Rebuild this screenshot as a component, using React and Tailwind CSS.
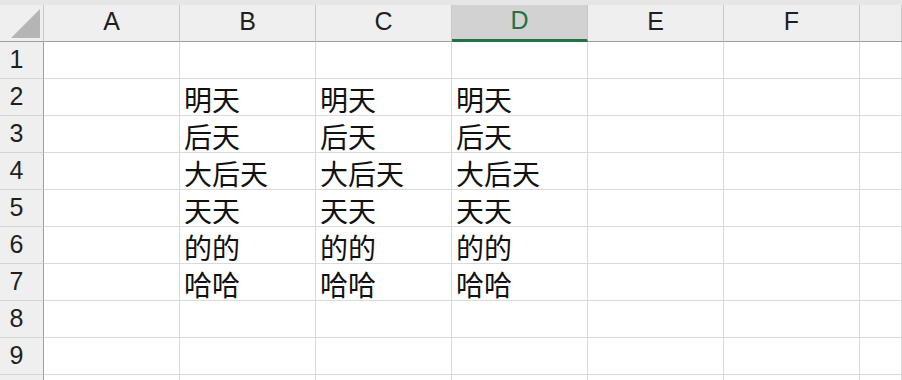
import React from 'react';

const columns = ['A', 'B', 'C', 'D', 'E', 'F', ''];
const selectedCol = 'D';

// values in columns B, C and D, rows 2 to 7
const words = ['明天', '后天', '大后天', '天天', '的的', '哈哈'];

const cellValue = (row, col) => {
  if (['B', 'C', 'D'].includes(col) && row >= 2 && row <= 7) return words[row - 2];
  return '';
};

const latin = { fontFamily: '"Liberation Sans", Arial, sans-serif' };
const cjk = { fontFamily: '"Noto Sans CJK SC", "Noto Sans", sans-serif' };

const App = () => {
  const rows = [1, 2, 3, 4, 5, 6, 7, 8, 9, 10];

  return (
    <div className="w-[902px] h-[380px] overflow-hidden bg-white">
      <div className="h-[5px] bg-[#e6e6e6]" />
      <div className="grid grid-cols-[44px_136px_136px_136px_136px_136px_136px_1fr]">
        {/* --- header row --- */}
        <div className="h-[37px] bg-[#efefef] border-r border-b border-r-[#c8c8c8] border-b-[#9e9e9e] flex items-end justify-end pr-[2px] pb-[2px]">
          <svg width="30" height="30" viewBox="0 0 30 30">
            <polygon points="29,0 29,29 0,29" fill="#b5b5b5" />
          </svg>
        </div>
        {columns.map((col, i) => {
          const active = col === selectedCol;
          return (
            <div
              key={i}
              style={latin}
              className={
                'h-[37px] flex items-center justify-center text-[25px] pb-[3px] ' +
                (active
                  ? 'bg-[#d2d2d2] text-[#217346] border-b-[3px] border-b-[#217346] border-r border-r-[#c8c8c8]'
                  : 'bg-[#efefef] text-[#1f1f1f] border-b border-b-[#9e9e9e] border-r border-r-[#c8c8c8]')
              }
            >
              {col}
            </div>
          );
        })}

        {/* --- body rows --- */}
        {rows.map((row) => (
          <React.Fragment key={row}>
            <div
              style={latin}
              className="h-[37px] bg-[#efefef] border-r border-b border-r-[#9e9e9e] border-b-[#d4d4d4] flex items-center justify-center pr-[10px] text-[25px] text-[#1f1f1f]"
            >
              {row < 10 ? row : ''}
            </div>
            {columns.map((col, i) => (
              <div
                key={i}
                style={cjk}
                className="h-[37px] border-r border-b border-[#dadada] flex items-center pl-[4px] pt-[4px] text-[28px] leading-none text-[#111] whitespace-nowrap"
              >
                {cellValue(row, col)}
              </div>
            ))}
          </React.Fragment>
        ))}
      </div>
    </div>
  );
};

export default App;
